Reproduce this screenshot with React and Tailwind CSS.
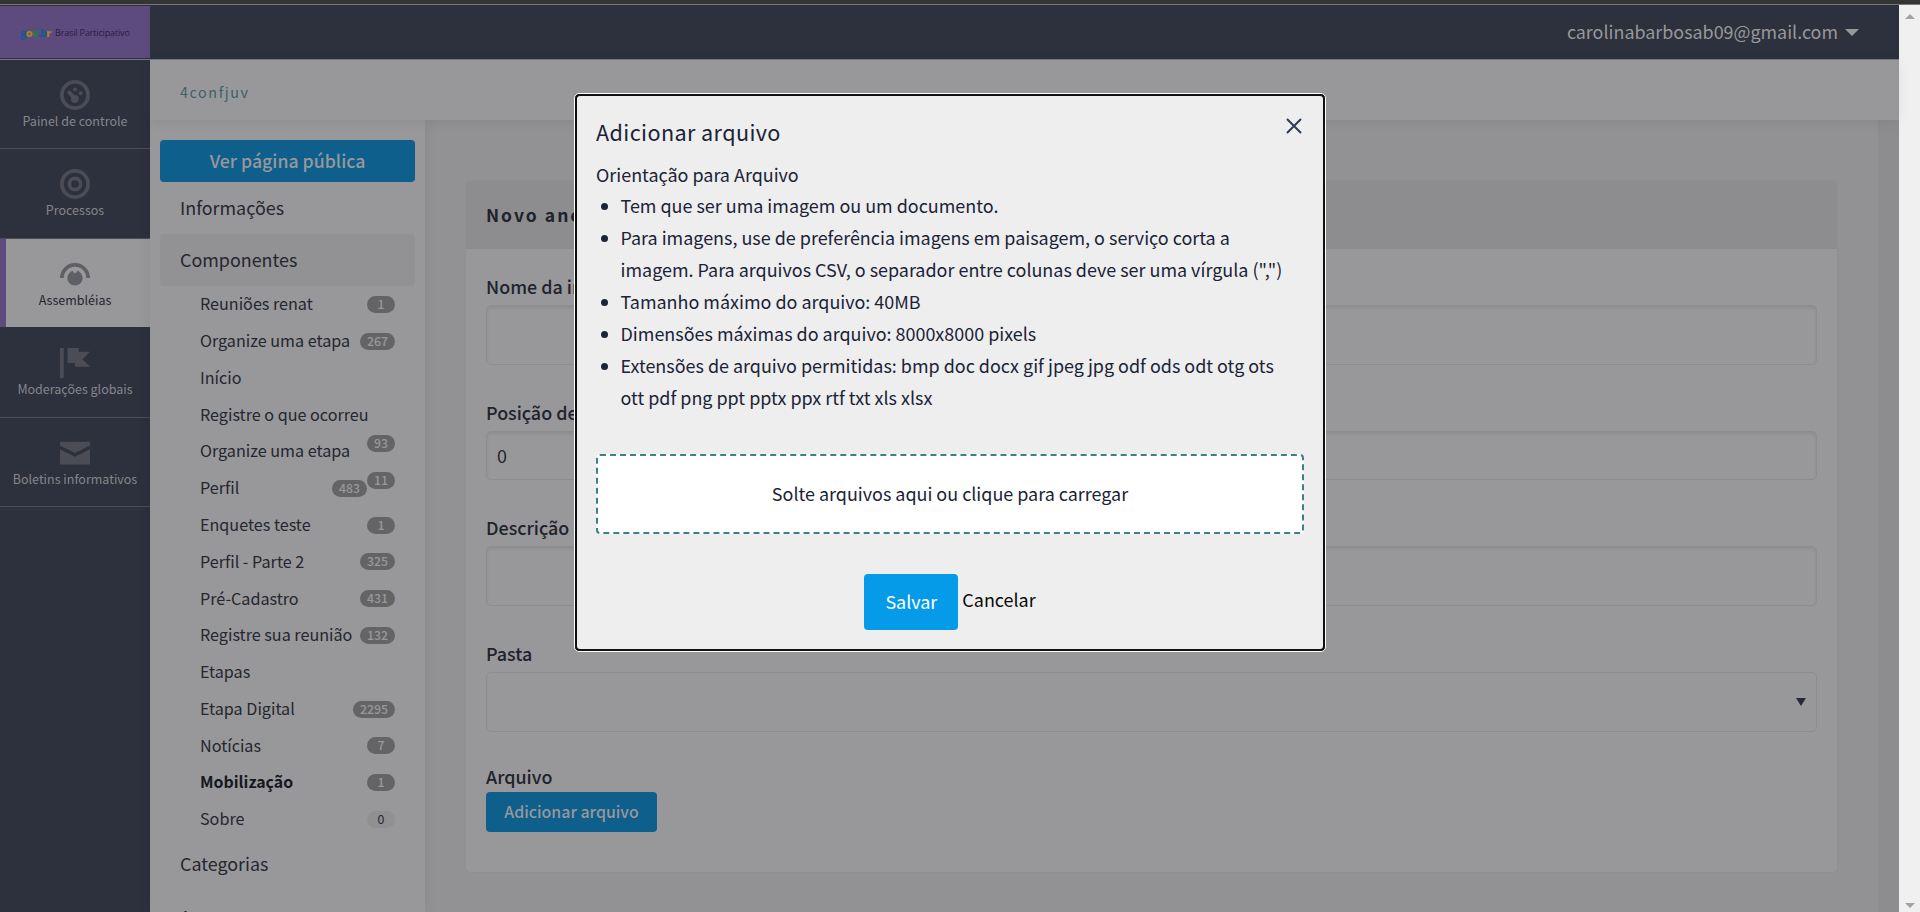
import React from "react";

const NAV = [
  { label: "Painel de controle", icon: "dial" },
  { label: "Processos", icon: "target" },
  { label: "Assembléias", icon: "assembly", active: true },
  { label: "Moderações globais", icon: "flag" },
  { label: "Boletins informativos", icon: "mail" },
];

const COMPONENTS = [
  { label: "Reuniões renat", count: 1 },
  { label: "Organize uma etapa", count: 267 },
  { label: "Início" },
  { label: "Registre o que ocorreu" },
  { label: "Organize uma etapa", raised: 93 },
  { label: "Perfil", count: 483, raised: 11 },
  { label: "Enquetes teste", count: 1 },
  { label: "Perfil - Parte 2", count: 325 },
  { label: "Pré-Cadastro", count: 431 },
  { label: "Registre sua reunião", count: 132 },
  { label: "Etapas" },
  { label: "Etapa Digital", count: 2295 },
  { label: "Notícias", count: 7 },
  { label: "Mobilização", count: 1, current: true },
  { label: "Sobre", count: 0 },
];

const RULES = [
  "Tem que ser uma imagem ou um documento.",
  'Para imagens, use de preferência imagens em paisagem, o serviço corta a imagem. Para arquivos CSV, o separador entre colunas deve ser uma vírgula (",")',
  "Tamanho máximo do arquivo: 40MB",
  "Dimensões máximas do arquivo: 8000x8000 pixels",
  "Extensões de arquivo permitidas: bmp doc docx gif jpeg jpg odf ods odt otg ots ott pdf png ppt pptx ppx rtf txt xls xlsx",
];

function NavIcon({ name }) {
  return (
    <svg viewBox="0 0 30 30" className="size-[30px] shrink-0" fill="currentColor">
      {name === "dial" && (
        <>
          <circle cx="15" cy="15" r="13.1" fill="none" stroke="currentColor" strokeWidth="3.8" />
          <circle cx="15" cy="9.4" r="2" />
          <circle cx="20.6" cy="13.2" r="2" />
          <path d="M8 11.2a2 2 0 0 1 2.8 0L14.6 14.9a4 4 0 1 1-3.7 4.3l0-1.6L8 14a2 2 0 0 1 0-2.8z" />
        </>
      )}
      {name === "target" && (
        <>
          <circle cx="15" cy="15" r="13.1" fill="none" stroke="currentColor" strokeWidth="3.8" />
          <circle cx="15" cy="15" r="5.6" fill="none" stroke="currentColor" strokeWidth="3.7" />
        </>
      )}
      {name === "assembly" && (
        <>
          <path d="M0 19a15 15 0 0 1 30 0h-3.8a11.2 11.2 0 0 0-22.4 0z" />
          <path d="M12.6 11.8l1.5 2.6.9-1.2.9 1.2 1.5-2.6a7.6 7.6 0 1 1-4.8 0z" />
        </>
      )}
      {name === "flag" && <path d="M0 0h3.8v30H0zM7.5 0h11.2v3.8H30L22.5 11.2 30 18.8H15V15H7.5z" />}
      {name === "mail" && <path d="M0 3.8h30v3.6l-15 7.7L0 7.4zM0 11.3l15 7.5 15-7.5v15.2H0z" />}
    </svg>
  );
}

function Badge({ value, className = "" }) {
  const tone = value === 0 ? "bg-[#909091] text-[#25262f]" : "bg-[#646466] font-medium text-[#98989a]";
  return (
    <span
      className={`flex h-[17px] min-w-7 items-center justify-center rounded-full px-[7px] text-[12.3px] leading-[17px] ${tone} ${className}`}
    >
      {value}
    </span>
  );
}

function Field({ label, className, children }) {
  return (
    <div className={className}>
      <div className="h-8 overflow-hidden whitespace-nowrap text-[17.9px] font-medium leading-[30px] text-[#20222c]">{label}</div>
      {children}
    </div>
  );
}

export default function App() {
  return (
    <div className="relative flex h-[912px] w-[1920px] flex-col overflow-hidden bg-[#929294] font-['Noto_Sans_CJK_SC',sans-serif] text-[#25262f]">
      <div className="h-[5px] shrink-0 border-b border-[#767678] bg-[#353535]" />
      <div className="flex min-h-0 flex-1">
        <div className="flex w-[1899px] shrink-0 flex-col">
          <header className="flex h-[55px] shrink-0 items-center border-b border-[#74777f] bg-[#2d303d]">
            <div className="mt-px flex h-[52px] w-[150px] shrink-0 items-center self-start bg-[#5e4b7e] pl-5">
              <span className="w-[29px] whitespace-nowrap font-['Open_Sans',sans-serif] text-[11px] font-extrabold leading-none tracking-[-0.9px]">
                <span className="text-[#1c5694]">g</span>
                <span className="text-[#a3812b]">o</span>
                <span className="text-[#2c7a3a]">v</span>
                <span className="text-[#1c5694]">.b</span>
                <span className="text-[#a3812b]">r</span>
              </span>
              <span className="ml-1.5 whitespace-nowrap font-['Open_Sans',sans-serif] text-[9px] leading-none tracking-[-0.15px] text-[#2b1a42]">
                Brasil Participativo
              </span>
            </div>
            <div className="ml-auto flex items-center pr-10 text-[17.9px] leading-[52px] text-[#98989a]">
              <span className="pb-0.5">carolinabarbosab09@gmail.com</span>
              <svg viewBox="0 0 14 7" className="ml-[7px] h-[7px] w-[14px]" fill="currentColor">
                <path d="M0 0h14L7 7z" />
              </svg>
            </div>
          </header>

          <div className="flex min-h-0 flex-1">
            <nav className="w-[150px] shrink-0 bg-[#2d303d]">
              {NAV.map((item) => (
                <div
                  key={item.label}
                  className={`flex h-[89.5px] flex-col items-center border-b pt-5 text-[12.5px] first:h-[89px] ${
                    item.active
                      ? "border-[#2d303d] bg-[#98989a] text-[#25262f] shadow-[inset_6px_0_0_#5e4b7e]"
                      : "border-[#4a4c58] text-[#85868a]"
                  }`}
                >
                  <span className={item.active ? "text-[#5f6066]" : "text-[#4b4c56]"}>
                    <NavIcon name={item.icon} />
                  </span>
                  <span className="mt-px whitespace-nowrap leading-5">{item.label}</span>
                </div>
              ))}
            </nav>

            <div className="flex min-w-0 flex-1 flex-col">
              <div className="z-10 flex h-[60px] shrink-0 items-center bg-[#98989a] pl-[30px] pt-1 text-[14.3px] tracking-[1.6px] text-[#3b6167] shadow-[0_2px_12px_rgba(0,0,0,0.07)]">
                4confjuv
              </div>
              <div className="flex min-h-0 flex-1">
                <aside className="z-0 w-[275px] shrink-0 overflow-hidden bg-[#98989a] px-2.5 pt-5 shadow-[0_0_14px_rgba(0,0,0,0.08)]">
                  <div className="h-[42px] rounded bg-[#0e5f8c] text-center text-[17.7px] font-medium leading-[40px] text-[#98989a]">
                    Ver página pública
                  </div>
                  <div className="h-[52px] pl-5 text-[17.9px] leading-[51px]">Informações</div>
                  <div className="h-[52px] rounded bg-[#929294] pl-5 text-[17.9px] leading-[50px]">Componentes</div>
                  <ul className="pl-10 pr-5">
                    {COMPONENTS.map((c, i) => (
                      <li key={i} className="flex h-[36.8px] items-center justify-between whitespace-nowrap text-[16.15px]">
                        <span className={c.current ? "pb-0.5 text-[15.9px] font-bold text-[#161821]" : "pb-0.5"}>{c.label}</span>
                        <span className="flex shrink-0">
                          {c.count !== undefined && <Badge value={c.count} />}
                          {c.raised !== undefined && <Badge value={c.raised} className="mb-2 -mt-2" />}
                        </span>
                      </li>
                    ))}
                  </ul>
                  <div className="h-[52px] pl-5 text-[17.9px] leading-[51px]">Categorias</div>
                  <div className="h-[52px] pl-5 text-[17.9px] leading-[52px]">Anexos</div>
                </aside>

                <main className="flex-1 border-r-[21px] border-[#8d8d8f] pl-[40px] pr-10 pt-[60px]">
                  <section className="h-[693px] overflow-hidden rounded-[5px] border border-[#8f8f91] bg-[#98989a]">
                    <h2 className="h-[68px] bg-[#8d8d8f] pl-5 text-[17.5px] font-bold leading-[68px] tracking-[2px] text-[#20222c]">
                      Novo anexo
                    </h2>
                    <div className="px-5 pt-[22px]">
                      <Field label="Nome da imagem">
                        <div className="mt-0.5 h-[60px] rounded-[5px] border border-[#8d8d8f] shadow-[inset_0_2px_3px_rgba(0,0,0,0.07)]" />
                      </Field>
                      <Field label="Posição de ordem" className="mt-8">
                        <div className="mt-0.5 h-[49px] rounded-[5px] border border-[#8d8d8f] pl-2.5 text-[17.9px] leading-[46px] shadow-[inset_0_2px_3px_rgba(0,0,0,0.07)]">
                          0
                        </div>
                      </Field>
                      <Field label="Descrição" className="mt-8">
                        <div className="mt-0.5 h-[60px] rounded-[5px] border border-[#8d8d8f] shadow-[inset_0_2px_3px_rgba(0,0,0,0.07)]" />
                      </Field>
                      <Field label="Pasta" className="mt-8">
                        <div className="mt-0.5 flex h-[60px] items-center justify-end rounded-[5px] border border-[#8d8d8f] pr-[10px]">
                          <svg viewBox="0 0 10 8" className="h-2 w-2.5" fill="#25293a">
                            <path d="M0 0h10L5 8z" />
                          </svg>
                        </div>
                      </Field>
                      <Field label="Arquivo" className="mt-[29px]">
                        <div className="-mt-px flex h-10 w-[171px] items-center justify-center rounded bg-[#0e5f8c] pb-px text-[15.9px] font-medium text-[#98989a]">
                          Adicionar arquivo
                        </div>
                      </Field>
                    </div>
                  </section>
                </main>
              </div>
            </div>
          </div>
        </div>

        <div className="flex flex-1 flex-col items-center justify-between bg-[#f0f0f0] pb-1 pt-[9px] text-[#a3a3a3]">
          <svg viewBox="0 0 10 5" className="h-[5px] w-2.5" fill="currentColor">
            <path d="M0 5h10L5 0z" />
          </svg>
          <svg viewBox="0 0 10 5" className="h-[5px] w-2.5" fill="currentColor">
            <path d="M0 0h10L5 5z" />
          </svg>
        </div>
      </div>

      <div
        role="dialog"
        className="absolute left-[574px] top-[93px] z-20 h-[559px] w-[752px] rounded-[5px] border border-white bg-[#101010] p-0.5"
      >
        <div className="flex h-full flex-col rounded-[3px] bg-[#eeeeee] px-[19px] text-[#1b2336]">
          <div className="flex items-start justify-between">
            <h1 className="mt-4 h-10 text-[21.6px] leading-10 tracking-[0.4px]">Adicionar arquivo</h1>
            <svg viewBox="0 0 16 16" className="mr-[2.5px] mt-[22px] size-4" fill="none" stroke="#2f3b52" strokeWidth="2">
              <path d="M1 1l14 14M15 1L1 15" />
            </svg>
          </div>
          <p className="mt-1.5 h-[31px] text-[17.95px] leading-8">Orientação para Arquivo</p>
          <ul className="text-[17.96px] leading-8">
            {RULES.map((rule) => (
              <li key={rule} className="flex">
                <span className="ml-[5px] mr-[12.5px] mt-[14px] size-[7px] shrink-0 rounded-full bg-[#1b2336]" />
                <span className="w-[668px]">{rule}</span>
              </li>
            ))}
          </ul>
          <div className="mt-[41px] flex h-20 shrink-0 items-center justify-center rounded border-2 border-dashed border-[#3b8186] bg-white pb-0.5 text-[17.94px]">
            Solte arquivos aqui ou clique para carregar
          </div>
          <div className="mt-10 flex items-start justify-center gap-1 text-[17.94px]">
            <span className="flex h-14 w-[94px] items-center justify-center rounded bg-[#069be8] pb-0.5 text-white">Salvar</span>
            <span className="leading-[50px] text-[#0a0a0a]">Cancelar</span>
          </div>
        </div>
      </div>
    </div>
  );
}
